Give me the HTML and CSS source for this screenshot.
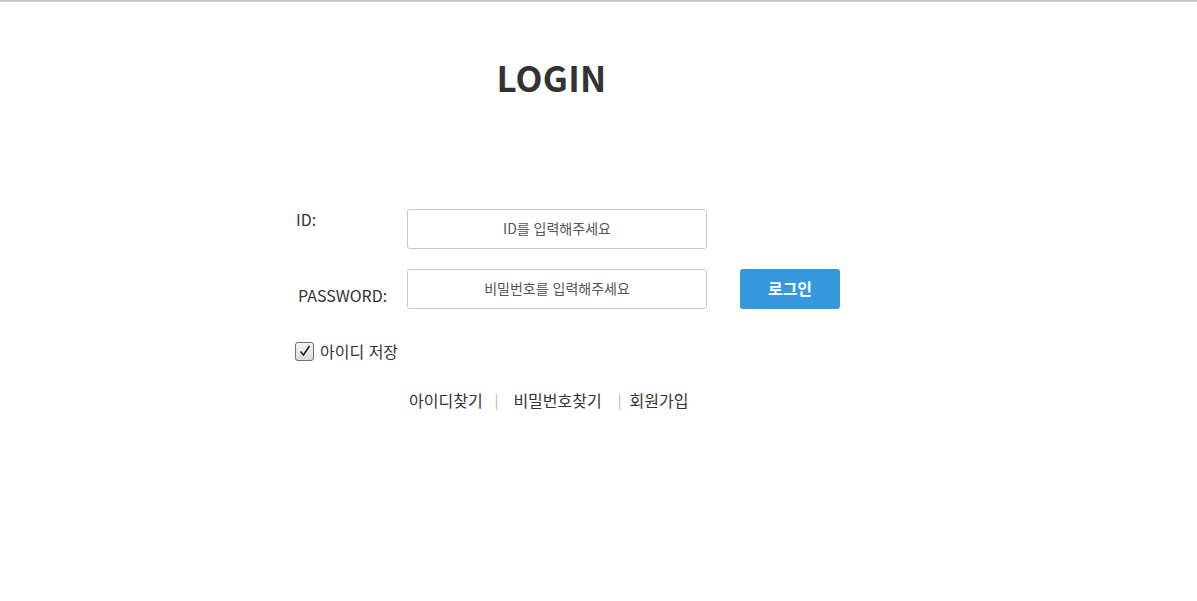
FILE: index.html
```html
<!DOCTYPE html>
<html lang="ko">
<head>
<meta charset="utf-8">
<title>LOGIN</title>
<link rel="stylesheet" href="styles.css">
</head>
<body>
<div class="topline"></div>
<main class="wrap">
  <h1 class="title">LOGIN</h1>
  <form class="form">
    <div class="row">
      <label class="label label-id" for="uid" lang="en">ID:</label>
      <input class="field" id="uid" type="text" placeholder="ID를 입력해주세요">
    </div>
    <div class="row">
      <label class="label label-pw" for="upw" lang="en">PASSWORD:</label>
      <input class="field" id="upw" type="password" placeholder="비밀번호를 입력해주세요">
      <button class="btn" type="button">로그인</button>
    </div>
    <label class="save">
      <span class="box"><svg width="14" height="14" viewBox="0 0 14 14"><path d="M2.5 7.5 L5.5 11 L11.5 2" fill="none" stroke="#222" stroke-width="1.6"/></svg></span>
      <span>아이디 저장</span>
    </label>
    <nav class="links">
      <a href="#">아이디찾기</a><span class="sep sep1">|</span><a href="#">비밀번호찾기</a><span class="sep sep2">|</span><a href="#">회원가입</a>
    </nav>
  </form>
</main>
</body>
</html>
```
FILE: styles.css
```css
* { box-sizing: border-box; }
html, body { margin: 0; padding: 0; background: #fff; }
body {
  font-family: "Noto Sans CJK KR", "Noto Sans", sans-serif;
  color: #333;
  height: 601px;
  overflow: hidden;
}
.topline {
  height: 2px;
  background: #d6d6d6;
  border-top: 1px solid #c4c4c4;
}
.wrap {
  width: 1197px;
  padding-left: 295px;
}
.title {
  margin: 0;
  padding-top: 50px;
  width: 513px;
  text-align: center;
  font-size: 35px;
  line-height: 50px;
  font-weight: 700;
  color: #333;
  letter-spacing: 0.3px;
}
.form {
  margin-top: 107px;
}
.row {
  display: flex;
  align-items: flex-start;
  height: 40px;
  margin-bottom: 20px;
}
.label {
  width: 112px;
  font-family: "Noto Sans CJK JP", "Noto Sans", sans-serif;
  font-size: 16px;
  line-height: 20px;
  color: #333;
}
.label-id { padding-top: 0px; padding-left: 1px; }
.label-pw { padding-top: 16px; padding-left: 3px; }
.field {
  width: 300px;
  height: 40px;
  border: 1px solid #c8c8c8;
  border-radius: 3px;
  text-align: center;
  font-family: inherit;
  font-size: 14px;
  color: #555;
  outline: none;
  padding: 0 0 2px;
}
.field::placeholder { color: #555; }
.btn {
  margin-left: 33px;
  width: 100px;
  height: 40px;
  border: none;
  border-radius: 3px;
  background: #3498db;
  color: #fff;
  font-family: inherit;
  font-size: 16px;
  font-weight: 700;
  padding: 0 0 2px;
}
.save {
  display: flex;
  align-items: center;
  gap: 6px;
  margin-top: 30px;
  font-size: 16px;
  color: #333;
}
.box {
  width: 19px;
  height: 19px;
  border: 1px solid #6f6f6f;
  border-radius: 3px;
  background: linear-gradient(#f6f6f6, #dadada);
  display: flex;
  align-items: center;
  justify-content: center;
}
.links {
  margin-top: 25px;
  padding-left: 114px;
  font-size: 16px;
  display: flex;
  align-items: center;
}
.links a { color: #333; text-decoration: none; }
.sep { color: #b4b4b4; font-size: 14px; }
.sep1 { margin: 0 15px 0 12px; }
.sep2 { margin: 0 8px 0 16px; }
```
